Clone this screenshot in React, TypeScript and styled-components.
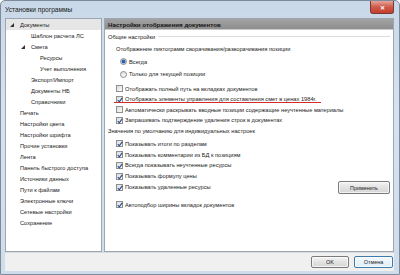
import React from "react";
import styled, { createGlobalStyle } from "styled-components";

const GlobalStyle = createGlobalStyle`
	html, body {
		margin: 0;
		padding: 0;
		background: #fff;
	}
	body {
		font-family: "Liberation Sans", Arial, sans-serif;
		font-size: 5.7px;
		color: #1a1a1a;
	}
`;

interface TreeItem {
	label: string;
	level: number;
	expanded?: boolean;
	selected?: boolean;
}

const treeItems: TreeItem[] = [
	{ label: "Документы", level: 0, expanded: true, selected: true },
	{ label: "Шаблон расчета ЛС", level: 1 },
	{ label: "Смета", level: 1, expanded: true },
	{ label: "Ресурсы", level: 2 },
	{ label: "Учет выполнения", level: 2 },
	{ label: "Экспорт/Импорт", level: 1 },
	{ label: "Документы НБ", level: 1 },
	{ label: "Справочники", level: 1 },
	{ label: "Печать", level: 0 },
	{ label: "Настройки цвета", level: 0 },
	{ label: "Настройки шрифта", level: 0 },
	{ label: "Прочие установки", level: 0 },
	{ label: "Лента", level: 0 },
	{ label: "Панель быстрого доступа", level: 0 },
	{ label: "Источники данных", level: 0 },
	{ label: "Пути к файлам", level: 0 },
	{ label: "Электронные ключи", level: 0 },
	{ label: "Сетевые настройки", level: 0 },
	{ label: "Сохранение", level: 0 },
];

const defaults = [
	"Показывать итоги по разделам",
	"Показывать комментарии из БД к позициям",
	"Всегда показывать неучтенные ресурсы",
	"Показывать формулу цены",
	"Показывать удаленные ресурсы",
];

const Expander = () => (
	<svg width="4" height="4" viewBox="0 0 4 4">
		<polygon points="4,0 4,4 0,4" fill="#333" />
	</svg>
);

const Check = ({ checked }: { checked?: boolean }) => (
	<CheckBox>
		{checked && (
			<svg width="6" height="6" viewBox="0 0 6 6">
				<path d="M0.8 3.2 L2.3 4.8 L5.2 0.9" stroke="#2a4f8a" strokeWidth="1.2" fill="none" />
			</svg>
		)}
	</CheckBox>
);

const CheckRow = ({ checked, children }: { checked?: boolean; children: React.ReactNode }) => (
	<OptionRow indent={8}>
		<Check checked={checked} />
		<span>{children}</span>
	</OptionRow>
);

const App = () => {
	return (
		<>
			<GlobalStyle />
			<Window>
				<TitleBar>
					<Title>Установки программы</Title>
					<CloseButton>✕</CloseButton>
				</TitleBar>
				<Body>
					<Tree>
						{treeItems.map((item) => (
							<TreeRow key={item.label} level={item.level} selected={item.selected}>
								<ExpanderSlot>{item.expanded && <Expander />}</ExpanderSlot>
								<span>{item.label}</span>
							</TreeRow>
						))}
					</Tree>
					<Panel>
						<PanelHeader>Настройки отображения документов</PanelHeader>
						<Content>
							<GroupTitle>
								<span>Общие настройки</span>
								<GroupLine />
							</GroupTitle>
							<OptionRow indent={8}>
								Отображение пиктограмм сворачивания/разворачивания позиции
							</OptionRow>
							<Radios>
								<OptionRow indent={12}>
									<Radio selected />
									<span>Всегда</span>
								</OptionRow>
								<OptionRow indent={12}>
									<Radio />
									<span>Только для текущей позиции</span>
								</OptionRow>
							</Radios>
							<Checks>
								<CheckRow>Отображать полный путь на вкладках документов</CheckRow>
								<CheckRow checked>
									<Marked>Отображать элементы управления для составления смет в ценах 1984г.</Marked>
								</CheckRow>
								<CheckRow>
									Автоматически раскрывать вводные позиции содержащие неучтенные материалы
								</CheckRow>
								<CheckRow checked>Запрашивать подтверждение удаления строк в документах</CheckRow>
							</Checks>
							<GroupTitle>
								<span>Значения по умолчанию для индивидуальных настроек</span>
							</GroupTitle>
							<DefaultsBlock>
								<DefaultChecks>
									{defaults.map((d) => (
										<CheckRow key={d} checked>
											{d}
										</CheckRow>
									))}
								</DefaultChecks>
								<ApplyButton>Применить</ApplyButton>
							</DefaultsBlock>
							<AutoFit>
								<CheckRow checked>Автоподбор ширины вкладок документов</CheckRow>
							</AutoFit>
						</Content>
					</Panel>
				</Body>
				<Footer>
					<PushButton width={38}>OK</PushButton>
					<PushButton width={39} focused>
						Отмена
					</PushButton>
				</Footer>
			</Window>
		</>
	);
};

export default App;

const Window = styled.div`
	width: 400px;
	height: 275px;
	box-sizing: border-box;
	display: flex;
	flex-direction: column;
	background: linear-gradient(#c9d8e8, #d6e2ef 40%, #cfdcea);
	border: 1px solid #7d8a99;
	border-radius: 5px 5px 0 0;
	overflow: hidden;
`;

const TitleBar = styled.div`
	height: 17px;
	display: flex;
	align-items: flex-start;
	justify-content: space-between;
	padding: 0 5px 0 4px;
`;

const Title = styled.div`
	font-size: 6.6px;
	line-height: 17px;
	color: #1a1a1a;
`;

const CloseButton = styled.div`
	width: 22px;
	height: 12px;
	display: grid;
	place-items: center;
	font-size: 6px;
	font-weight: 700;
	color: #fff;
	background: linear-gradient(#e6a59c, #cf5a4a 50%, #c43e2c);
	border: 1px solid #7a3a33;
	border-top: none;
	border-radius: 0 0 3px 3px;
`;

const Body = styled.div`
	height: 234px;
	display: flex;
	gap: 2px;
	padding: 0 5px 0 4px;
`;

const Tree = styled.div`
	width: 97px;
	box-sizing: border-box;
	background: #fff;
	border: 1px solid #9ba7b4;
`;

const TreeRow = styled.div<{ level: number; selected?: boolean }>`
	height: 11px;
	display: flex;
	align-items: center;
	padding-left: ${({ level }) => 3 + (level === 0 ? 0 : level === 1 ? 11 : 20)}px;
	background: ${({ selected }) => (selected ? "#e6e6e6" : "transparent")};
	white-space: nowrap;
`;

const ExpanderSlot = styled.div`
	width: 10px;
	flex: none;
	display: flex;
	align-items: center;
	padding-left: 1px;
`;

const Panel = styled.div`
	flex: 1;
	display: flex;
	flex-direction: column;
	background: #fff;
	border: 1px solid #9ba7b4;
`;

const PanelHeader = styled.div`
	height: 10px;
	flex: none;
	display: flex;
	align-items: center;
	padding-left: 3px;
	font-size: 6.2px;
	font-weight: 700;
	color: #161616;
	background: linear-gradient(#a3a3a3, #8d8d8d);
	border-bottom: 1px solid #c8c8c8;
`;

const Content = styled.div`
	flex: 1;
	display: flex;
	flex-direction: column;
	padding: 1px 3px 0 3px;
`;

const GroupTitle = styled.div`
	height: 11px;
	display: flex;
	align-items: center;
	gap: 3px;
	white-space: nowrap;
`;

const GroupLine = styled.div`
	flex: 1;
	height: 1px;
	background: #dcdcdc;
`;

const OptionRow = styled.div<{ indent: number }>`
	height: 10.5px;
	display: flex;
	align-items: center;
	gap: 2px;
	padding-left: ${({ indent }) => indent}px;
	white-space: nowrap;
	margin-top: 2px;
`;

const Radios = styled.div`
	display: flex;
	flex-direction: column;
`;

const Radio = styled.div<{ selected?: boolean }>`
	width: 7px;
	height: 7px;
	box-sizing: border-box;
	border-radius: 50%;
	border: 1px solid #8a8a8a;
	background: ${({ selected }) =>
		selected
			? "radial-gradient(circle, #2e5fa8 0 1.6px, #8fb2e0 2px, #eef2f8 2.6px)"
			: "linear-gradient(#e0e0e0, #fafafa)"};
`;

const Checks = styled.div`
	display: flex;
	flex-direction: column;
	margin-top: 4px;

	& > div {
		margin-top: 0;
	}
`;

const DefaultChecks = styled.div`
	display: flex;
	flex-direction: column;
	margin-top: 2px;

	& > div {
		margin-top: 0;
		height: 10.8px;
	}
`;

const CheckBox = styled.div`
	width: 7px;
	height: 7px;
	box-sizing: border-box;
	flex: none;
	display: grid;
	place-items: center;
	border: 1px solid #8e8f8f;
	background: linear-gradient(135deg, #dcdcdc, #fbfbfb);
`;

const Marked = styled.span`
	border-bottom: 1.5px solid #d42a2a;
	margin-left: -11px;
	padding-left: 11px;
	padding-right: 4px;
`;

const DefaultsBlock = styled.div`
	display: flex;
	align-items: flex-end;
	justify-content: space-between;
`;

const AutoFit = styled.div`
	margin-top: 5px;
`;

const PushButton = styled.div<{ width: number; focused?: boolean }>`
	width: ${({ width }) => width}px;
	height: 12px;
	box-sizing: border-box;
	display: grid;
	place-items: center;
	font-size: 5.4px;
	color: #1a1a1a;
	border-radius: 2px;
	border: 1px solid ${({ focused }) => (focused ? "#3d7bad" : "#7a7a7a")};
	background: ${({ focused }) =>
		focused ? "linear-gradient(#f4f9fd, #dfeef9)" : "linear-gradient(#f4f4f4, #e2e2e2 50%, #d6d6d6)"};
	box-shadow: inset 0 0 0 1px rgba(255, 255, 255, 0.7);
`;

const ApplyButton = styled(PushButton).attrs({ width: 52 })`
	height: 13px;
	margin: 0 0 -2px auto;
`;

const Footer = styled.div`
	height: 18px;
	display: flex;
	align-items: center;
	justify-content: flex-end;
	gap: 5px;
	margin: 0 5px 0 4px;
	padding-right: 1px;
	background: #f0f0f0;
	border-top: 1px solid #dadada;
`;
